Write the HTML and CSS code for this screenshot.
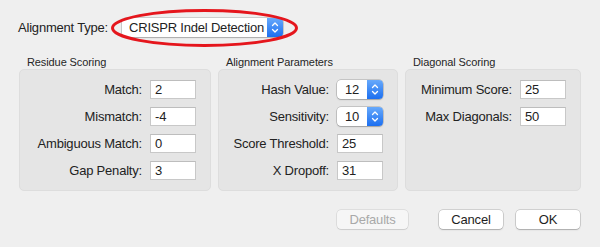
FILE: index.html
```html
<!DOCTYPE html>
<html>
<head>
<meta charset="utf-8">
<title>Alignment Options</title>
<link rel="stylesheet" href="styles.css">
</head>
<body>
<div class="window">
  <div class="top-row">
    <span class="top-label">Alignment Type:</span>
    <div class="popup popup-main">
      <span class="popup-text">CRISPR Indel Detection</span>
      <span class="stepper"><svg viewBox="0 0 16 19" width="16" height="19"><path d="M5.5 7.5 L8 5 L10.5 7.5 M5.5 11.5 L8 14 L10.5 11.5" fill="none" stroke="#fff" stroke-width="1.3" stroke-linecap="round" stroke-linejoin="round"/></svg></span>
    </div>
    <svg class="annot" viewBox="0 0 187 38" width="187" height="38"><ellipse cx="93.5" cy="19" rx="92" ry="17.5" fill="none" stroke="#e5161d" stroke-width="3"/></svg>
  </div>

  <div class="groups">
    <section class="group g-residue">
      <div class="group-title">Residue Scoring</div>
      <div class="box">
        <div class="form">
          <span class="flabel">Match:</span><span class="field">2</span>
          <span class="flabel">Mismatch:</span><span class="field">-4</span>
          <span class="flabel">Ambiguous Match:</span><span class="field">0</span>
          <span class="flabel">Gap Penalty:</span><span class="field">3</span>
        </div>
      </div>
    </section>

    <section class="group g-align">
      <div class="group-title">Alignment Parameters</div>
      <div class="box">
        <div class="form">
          <span class="flabel">Hash Value:</span>
          <span class="popup popup-small"><span class="popup-text">12</span><span class="stepper"><svg viewBox="0 0 16 19" width="16" height="19"><path d="M5.5 7.5 L8 5 L10.5 7.5 M5.5 11.5 L8 14 L10.5 11.5" fill="none" stroke="#fff" stroke-width="1.3" stroke-linecap="round" stroke-linejoin="round"/></svg></span></span>
          <span class="flabel">Sensitivity:</span>
          <span class="popup popup-small"><span class="popup-text">10</span><span class="stepper"><svg viewBox="0 0 16 19" width="16" height="19"><path d="M5.5 7.5 L8 5 L10.5 7.5 M5.5 11.5 L8 14 L10.5 11.5" fill="none" stroke="#fff" stroke-width="1.3" stroke-linecap="round" stroke-linejoin="round"/></svg></span></span>
          <span class="flabel">Score Threshold:</span><span class="field">25</span>
          <span class="flabel">X Dropoff:</span><span class="field">31</span>
        </div>
      </div>
    </section>

    <section class="group g-diag">
      <div class="group-title">Diagonal Scoring</div>
      <div class="box">
        <div class="form">
          <span class="flabel">Minimum Score:</span><span class="field">25</span>
          <span class="flabel">Max Diagonals:</span><span class="field">50</span>
        </div>
      </div>
    </section>
  </div>

  <div class="buttons">
    <button class="btn btn-defaults" disabled>Defaults</button>
    <button class="btn btn-cancel">Cancel</button>
    <button class="btn btn-ok">OK</button>
  </div>
</div>
</body>
</html>
```

FILE: styles.css
```css
html, body {
  margin: 0;
  padding: 0;
  background: #efefef;
}

.window {
  position: relative;
  width: 600px;
  height: 247px;
  font-family: "Liberation Sans", Arial, sans-serif;
  font-size: 13px;
  letter-spacing: -0.2px;
  color: #222;
  box-sizing: border-box;
}

.top-row {
  display: flex;
  align-items: center;
  padding: 18px 0 0 18px;
  height: 19px;
}

.top-label {
  margin-right: 14px;
  width: 90px;
  white-space: nowrap;
}

.popup {
  display: flex;
  align-items: center;
  box-sizing: border-box;
  height: 19px;
  background: #fff;
  border-radius: 4px;
  box-shadow: 0 0 0 0.5px rgba(0, 0, 0, 0.28), 0 1px 1.5px rgba(0, 0, 0, 0.18);
  overflow: hidden;
}

.popup-main {
  width: 161px;
}

.popup-text {
  flex: 1;
  padding-left: 7px;
  line-height: 19px;
  white-space: nowrap;
}

.stepper {
  width: 16px;
  height: 19px;
  background: linear-gradient(#67a9fb, #1c6ff0);
  display: flex;
}

.annot {
  position: absolute;
  left: 111px;
  top: 9px;
}

.groups {
  display: flex;
  gap: 7px;
  padding-left: 19px;
  margin-top: 19px;
}

.group-title {
  font-size: 11px;
  letter-spacing: -0.1px;
  line-height: 13px;
  height: 13px;
  padding-left: 8px;
  color: #262626;
}

.g-residue { width: 192px; }
.g-align { width: 180px; }
.g-diag { width: 176px; }

.box {
  box-sizing: border-box;
  height: 122px;
  background: #e5e5e5;
  border: 1px solid #dddddd;
  border-radius: 5px;
  padding: 10px 14px 0 0;
}

.form {
  display: grid;
  grid-template-columns: auto 46px;
  grid-auto-rows: 19px;
  row-gap: 8px;
  column-gap: 8px;
  justify-content: end;
  align-items: center;
}

.flabel {
  text-align: right;
  white-space: nowrap;
  line-height: 19px;
}

.field {
  box-sizing: border-box;
  width: 46px;
  height: 19px;
  background: #fff;
  border: 1px solid #c8c8c8;
  border-top-color: #bdbdbd;
  padding-left: 4px;
  line-height: 17px;
}

.popup-small {
  width: 46px;
}

.popup-small .popup-text {
  padding-left: 8px;
}

.buttons {
  display: flex;
  justify-content: flex-end;
  gap: 13px;
  padding-right: 20px;
  margin-top: 19px;
}

.btn {
  font-family: inherit;
  font-size: 13px;
  letter-spacing: -0.2px;
  height: 19px;
  line-height: 17px;
  padding: 0;
  width: 64px;
  background: #fff;
  color: #1e1e1e;
  border: none;
  border-radius: 4px;
  box-shadow: 0 0 0 0.5px rgba(0, 0, 0, 0.25), 0 1px 1.5px rgba(0, 0, 0, 0.18);
  text-align: center;
}

.btn-defaults {
  width: 71px;
  margin-right: 18px;
  background: #f6f6f6;
  color: #a9a9a9;
  box-shadow: 0 0 0 0.5px rgba(0, 0, 0, 0.14), 0 1px 1px rgba(0, 0, 0, 0.08);
}
```
